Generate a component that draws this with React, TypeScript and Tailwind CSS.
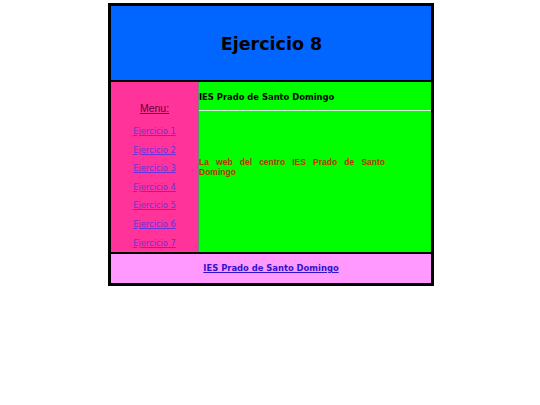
export default function App() {
  const links = [1, 2, 3, 4, 5, 6, 7];
  return (
    <div className="w-[540px] h-[405px] bg-white" style={{ fontFamily: '"DejaVu Sans", Verdana, sans-serif' }}>
      <div className="ml-[108px] pt-[3px]">
        <div className="w-[326px] border-[3px] border-black flex flex-col">
          <div className="h-[76px] bg-[#0066ff] flex items-center justify-center border-b-2 border-black">
            <h1 className="text-[17.5px] font-bold text-black leading-none mt-[4px] ml-[1px]">Ejercicio 8</h1>
          </div>
          <div className="h-[170px] flex">
            <div className="w-[87px] bg-[#ff3399] flex flex-col items-center pt-[20px]">
              <span className="text-[10.5px] leading-[12px] underline text-[#660033]" style={{ fontFamily: '"Liberation Sans", Arial, sans-serif' }}>Menu:</span>
              <div className="mt-[8px] flex flex-col items-center">
                {links.map((n) => (
                  <a key={n} href="#" className="h-[18.6px] flex items-center text-[8.3px] underline text-[#6633dd]">
                    Ejercicio {n}
                  </a>
                ))}
              </div>
            </div>
            <div className="flex-1 bg-[#00ff00] border-l border-[#6b8a6b] flex flex-col">
              <div className="pt-[9px] text-[8.4px] font-bold leading-[12px] text-black">IES Prado de Santo Domingo</div>
              <div className="mt-[7px] h-px bg-[#d8f0d8]" />
              <p className="mt-[46px] w-[186px] text-[8.5px] font-bold leading-[10px] text-[#bb3300] text-justify" style={{ fontFamily: '"Liberation Sans", Arial, sans-serif' }}>
                La web del centro IES Prado de Santo Domingo
              </p>
            </div>
          </div>
          <div className="h-[31px] bg-[#ff99ff] border-t-2 border-black flex items-center justify-center">
            <a href="#" className="text-[8.4px] font-bold underline text-[#3311cc]">IES Prado de Santo Domingo</a>
          </div>
        </div>
      </div>
    </div>
  );
}
